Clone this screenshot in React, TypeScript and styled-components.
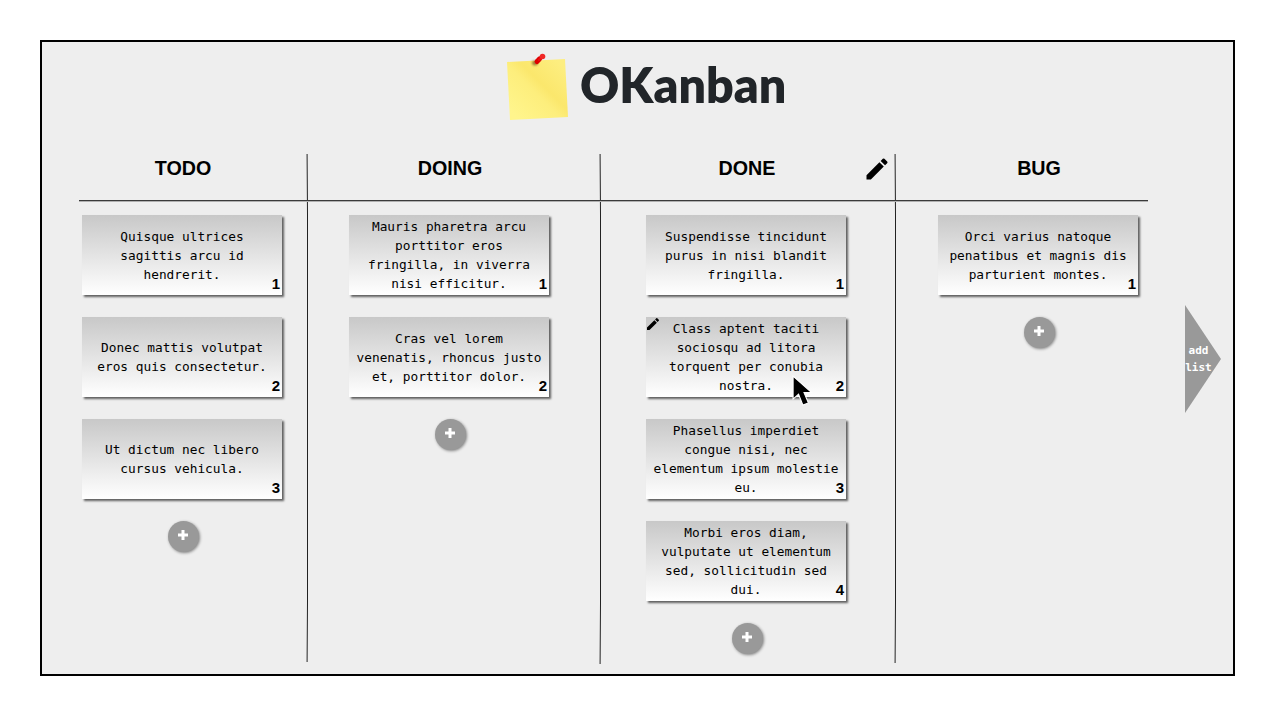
import React from "react";
import styled, { createGlobalStyle } from "styled-components";

const Global = createGlobalStyle`
  html, body { margin: 0; padding: 0; background: #fff; }
  body { font-family: "Liberation Sans", Arial, sans-serif; }
`;

const Page = styled.div`
  width: 1275px;
  height: 716px;
  padding: 40px;
  box-sizing: border-box;
`;

const Frame = styled.main`
  width: 1195px;
  height: 636px;
  box-sizing: border-box;
  border: 2px solid #000;
  background: #eee;
  display: flex;
  flex-direction: column;
`;

const Brand = styled.header`
  height: 112px;
  display: flex;
  align-items: flex-start;
  padding: 6px 0 0 458px;
  box-sizing: border-box;
  gap: 5px;
`;

const Title = styled.h1`
  margin: 6px 0 0;
  font: 800 48.3px/60px "Lato", "Noto Sans", sans-serif;
  color: #212529;
`;

const Board = styled.section`
  display: flex;
  align-items: flex-start;
  padding-left: 37px;
`;

const Column = styled.div<{ $w: number; $pad: number; $last?: boolean; $lineH: number }>`
  width: ${(p) => p.$w}px;
  height: ${(p) => p.$lineH}px;
  box-sizing: border-box;
  padding-left: ${(p) => p.$pad}px;
  background: ${(p) =>
    p.$last
      ? "none"
      : `linear-gradient(#999, #eee 12%, #eee 88%, #999) no-repeat right 1px top 0 / 1px 100%,
         linear-gradient(#777, #222 12%, #222 88%, #777) no-repeat right 0 top 0 / 1px 100%`};
`;

const ColumnHead = styled.div<{ $pad: number }>`
  position: relative;
  height: 46px;
  margin-left: -${(p) => p.$pad}px;
  padding-left: ${(p) => p.$pad}px;
  border-bottom: 1px solid #3a3a3a;
  box-shadow: 0 1px 0 #b0b0b0;
`;

const ColumnTitle = styled.h2`
  width: 201px;
  margin: 0;
  padding: 2px 0 0 1px;
  box-sizing: border-box;
  text-align: center;
  font: 700 19.7px/24px "Liberation Sans", Arial, sans-serif;
  color: #000;
`;

const EditHead = styled.span`
  position: absolute;
  right: 5px;
  top: 1px;
  display: block;
  line-height: 0;
`;

const CardList = styled.div`
  width: 201px;
  padding-top: 14px;
  display: flex;
  flex-direction: column;
  gap: 22px;
`;

const Card = styled.article`
  position: relative;
  width: 200px;
  height: 80px;
  padding: 0 7px;
  box-sizing: border-box;
  display: flex;
  align-items: center;
  justify-content: center;
  text-align: center;
  background: linear-gradient(#c8c8c8, #ffffff);
  box-shadow: 2px 2px 2px rgba(0, 0, 0, 0.6);
  font: 400 12.8px/19px "DejaVu Sans Mono", "Liberation Mono", monospace;
  color: #000;
`;

const CardText = styled.p`
  margin: 0;
`;

const CardNum = styled.span`
  position: absolute;
  right: 2px;
  bottom: 3px;
  font: 700 15px/16px "Liberation Sans", Arial, sans-serif;
  color: #000;
`;

const CardPencil = styled.span`
  position: absolute;
  left: -1px;
  top: -1px;
  line-height: 0;
`;

const Cursor = styled.span`
  position: absolute;
  left: 146px;
  top: 58px;
  line-height: 0;
`;

const AddCard = styled.button`
  display: flex;
  align-items: center;
  justify-content: center;
  align-self: flex-start;
  width: 31px;
  height: 31px;
  margin-left: 86px;
  padding: 0 1px 3px 0;
  box-sizing: border-box;
  border: 0;
  border-radius: 50%;
  background: #999;
  box-shadow: 1px 1px 3px rgba(0, 0, 0, 0.45);
`;

const AddList = styled.button`
  margin: 151px 0 0 37px;
  padding: 0;
  width: 36px;
  height: 108px;
  border: 0;
  background: #999;
  clip-path: polygon(0 0, 100% 50%, 0 100%);
  color: #fff;
  font: 700 11px/17px "DejaVu Sans Mono", "Liberation Mono", monospace;
`;

const AddLabel = styled.span`
  display: block;
  width: 27px;
  text-align: center;
`;

const Pencil = ({ size }: { size: number }) => (
  <svg width={size} height={size} viewBox="0 0 24 24" fill="#000">
    <path d="M3 17.25V21h3.75L17.81 9.94l-3.75-3.75L3 17.25zM20.71 7.04a1 1 0 0 0 0-1.41l-2.34-2.34a1 1 0 0 0-1.41 0l-1.83 1.83 3.75 3.75 1.83-1.83z" />
  </svg>
);

const PlusIcon = () => (
  <svg width="10" height="10" viewBox="0 0 10 10" fill="#fff">
    <path d="M3.5 0h3v3.5H10v3H6.5V10h-3V6.5H0v-3h3.5z" />
  </svg>
);

const Logo = () => (
  <svg width="75" height="78" viewBox="0 0 75 78">
    <defs>
      <linearGradient id="note" x1="0.1" y1="0.9" x2="0.9" y2="0.1">
        <stop offset="0" stopColor="#fff58c" />
        <stop offset="0.45" stopColor="#fdee7c" />
        <stop offset="0.6" stopColor="#fbe76c" />
        <stop offset="1" stopColor="#fdee80" />
      </linearGradient>
      <filter id="soft" x="-50%" y="-50%" width="200%" height="200%">
        <feGaussianBlur stdDeviation="0.8" />
      </filter>
    </defs>
    <polygon points="7,14 65,11 68,69 10,72" fill="url(#note)" />
    <ellipse cx="35" cy="15" rx="3" ry="2.4" fill="#7a5a20" opacity="0.75" filter="url(#soft)" />
    <line x1="37" y1="13.5" x2="39.5" y2="11" stroke="#e00000" strokeWidth="5" strokeLinecap="round" />
    <line x1="39" y1="12" x2="42" y2="9" stroke="#e81010" strokeWidth="2.5" strokeLinecap="round" />
    <circle cx="42.5" cy="8.5" r="2.8" fill="#f02828" />
  </svg>
);

const MouseArrow = () => (
  <svg width="24" height="34" viewBox="0 0 22 31">
    <path d="M1 1 L1 22 L6 17.5 L10 27.5 L15 25.5 L11 16 L18 16 Z" fill="#000" stroke="#fff" strokeWidth="1" />
  </svg>
);

type Col = { title: string; w: number; pad: number; lineH: number; last?: boolean; edit?: boolean; cards: string[] };

const columns: Col[] = [
  { title: "TODO", w: 229, pad: 3, lineH: 508, cards: ["Quisque ultrices sagittis arcu id hendrerit.", "Donec mattis volutpat eros quis consectetur.", "Ut dictum nec libero cursus vehicula."] },
  { title: "DOING", w: 293, pad: 41, lineH: 510, cards: ["Mauris pharetra arcu porttitor eros fringilla, in viverra nisi efficitur.", "Cras vel lorem venenatis, rhoncus justo et, porttitor dolor."] },
  { title: "DONE", w: 295, pad: 45, lineH: 509, edit: true, cards: ["Suspendisse tincidunt purus in nisi blandit fringilla.", "Class aptent taciti sociosqu ad litora torquent per conubia nostra.", "Phasellus imperdiet congue nisi, nec elementum ipsum molestie eu.", "Morbi eros diam, vulputate ut elementum sed, sollicitudin sed dui."] },
  { title: "BUG", w: 252, pad: 42, lineH: 508, last: true, cards: ["Orci varius natoque penatibus et magnis dis parturient montes."] },
];

export default function App() {
  return (
    <Page>
      <Global />
      <Frame>
        <Brand>
          <Logo />
          <Title>OKanban</Title>
        </Brand>
        <Board>
          {columns.map((c) => (
            <Column key={c.title} $w={c.w} $pad={c.pad} $last={c.last} $lineH={c.lineH}>
              <ColumnHead $pad={c.pad}>
                <ColumnTitle>{c.title}</ColumnTitle>
                {c.edit && (
                  <EditHead>
                    <Pencil size={28} />
                  </EditHead>
                )}
              </ColumnHead>
              <CardList>
                {c.cards.map((text, i) => (
                  <Card key={text}>
                    <CardText>{text}</CardText>
                    <CardNum>{i + 1}</CardNum>
                    {c.edit && i === 1 && (
                      <>
                        <CardPencil>
                          <Pencil size={16} />
                        </CardPencil>
                        <Cursor>
                          <MouseArrow />
                        </Cursor>
                      </>
                    )}
                  </Card>
                ))}
                <AddCard aria-label="add card">
                  <PlusIcon />
                </AddCard>
              </CardList>
            </Column>
          ))}
          <AddList>
            <AddLabel>add</AddLabel>
            <AddLabel>list</AddLabel>
          </AddList>
        </Board>
      </Frame>
    </Page>
  );
}
